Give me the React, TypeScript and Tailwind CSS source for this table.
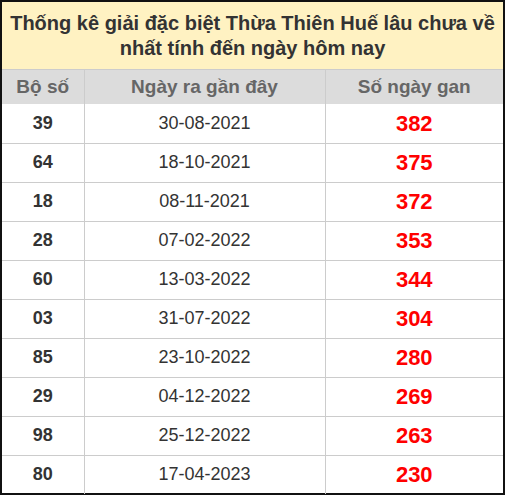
import React from 'react';

const rows = [
  { bo: '39', date: '30-08-2021', gan: 382 },
  { bo: '64', date: '18-10-2021', gan: 375 },
  { bo: '18', date: '08-11-2021', gan: 372 },
  { bo: '28', date: '07-02-2022', gan: 353 },
  { bo: '60', date: '13-03-2022', gan: 344 },
  { bo: '03', date: '31-07-2022', gan: 304 },
  { bo: '85', date: '23-10-2022', gan: 280 },
  { bo: '29', date: '04-12-2022', gan: 269 },
  { bo: '98', date: '25-12-2022', gan: 263 },
  { bo: '80', date: '17-04-2023', gan: 230 },
];

export default function App() {
  return (
    <div
      className="w-[505px] h-[495px] border-2 border-[#111] bg-white text-[#333]"
      style={{ fontFamily: '"Liberation Sans", Arial, sans-serif' }}
    >
      <div className="h-[68px] bg-[#fff2c2] flex items-center justify-center text-center font-bold text-[20px] leading-[25px] px-2 border-b border-[#ccc]">
        Thống kê giải đặc biệt Thừa Thiên Huế lâu chưa về nhất tính đến ngày hôm nay
      </div>
      <table className="w-full border-collapse table-fixed">
        <colgroup>
          <col className="w-[82px]" />
          <col className="w-[241px]" />
          <col />
        </colgroup>
        <thead>
          <tr className="h-[34px] bg-[#dcdcdc] text-[#666] text-[19px] font-bold">
            <th className="border-r border-[#ccc] font-bold">Bộ số</th>
            <th className="border-r border-[#ccc] font-bold">Ngày ra gần đây</th>
            <th className="font-bold">Số ngày gan</th>
          </tr>
        </thead>
        <tbody>
          {rows.map((r, i) => (
            <tr key={r.bo} className={`h-[39px] ${i > 0 ? 'border-t border-[#ccc]' : ''}`}>
              <td className="text-center font-bold text-[18px] border-r border-[#ccc]">{r.bo}</td>
              <td className="text-center text-[18px] border-r border-[#ccc]">{r.date}</td>
              <td className="text-center font-bold text-[22px] text-[#ff0000]">{r.gan}</td>
            </tr>
          ))}
        </tbody>
      </table>
    </div>
  );
}
